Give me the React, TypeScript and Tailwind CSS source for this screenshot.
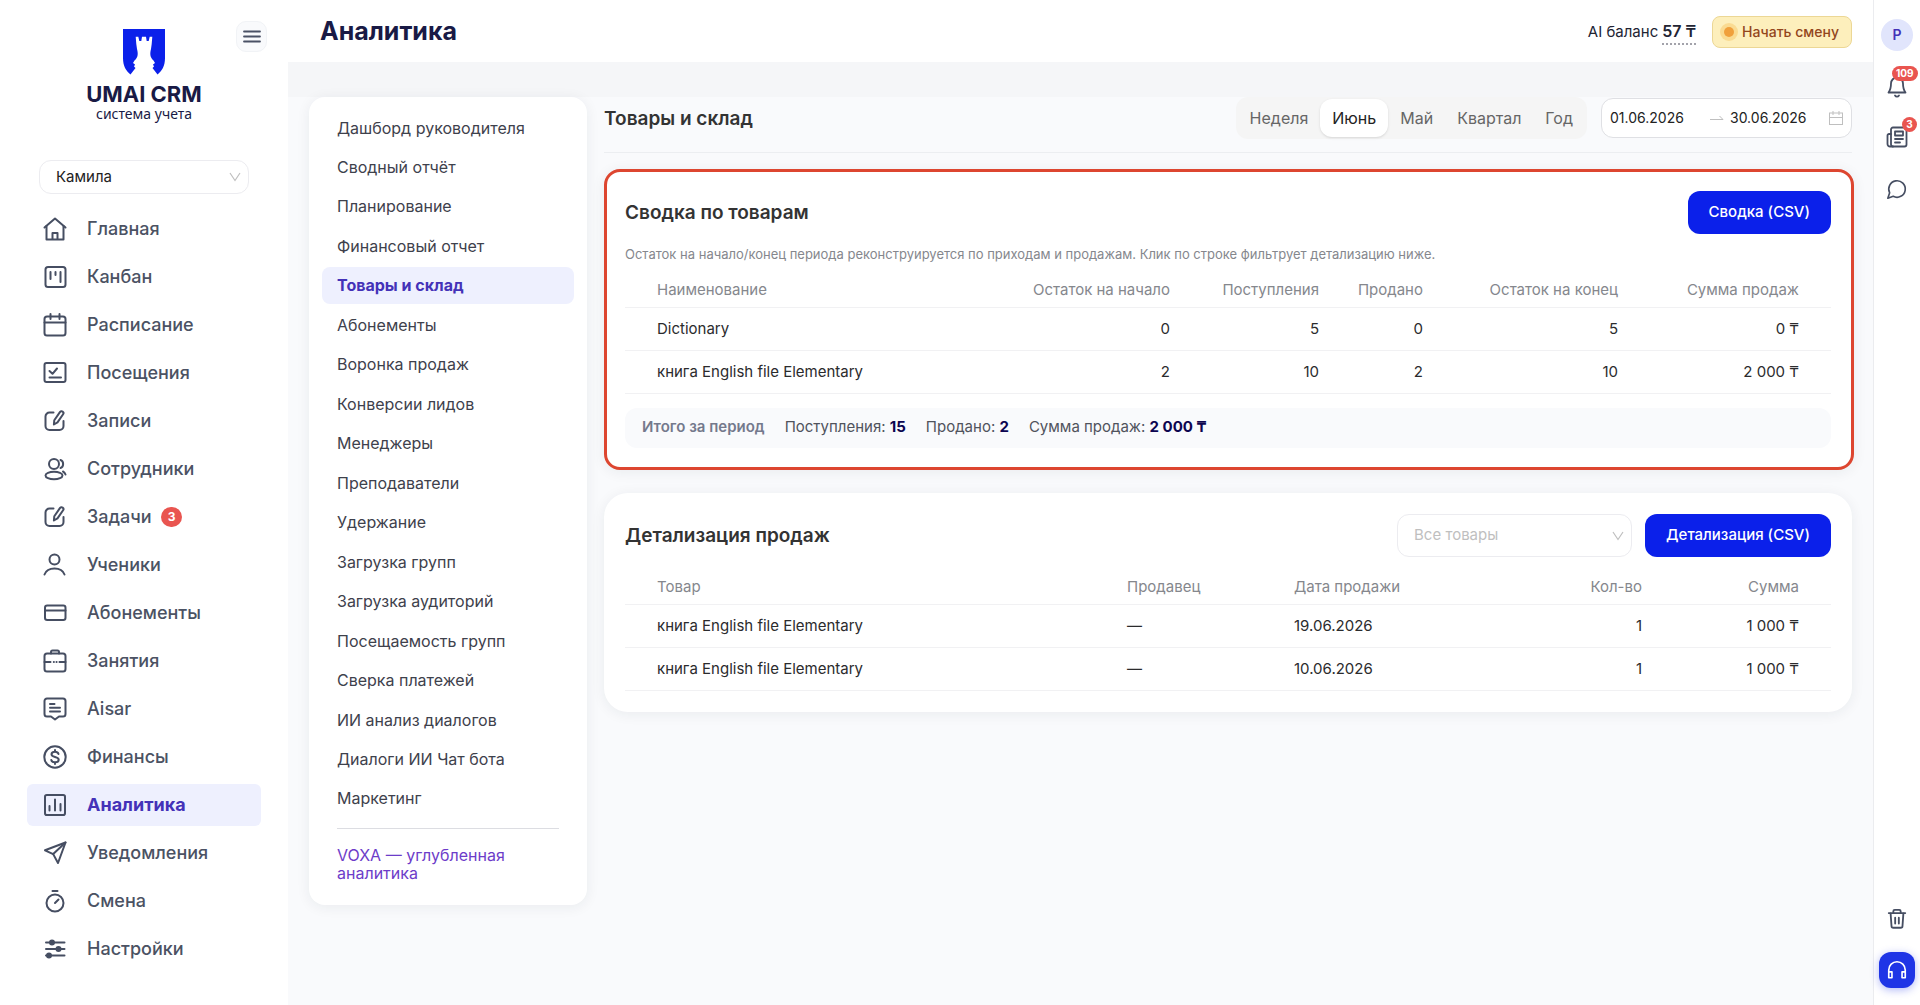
import React, { useState } from 'react';

type IconProps = { className?: string };

interface NavItem {
  label: string;
  icon: React.ReactNode;
  badge?: number;
}

interface Product {
  name: string;
  start: number;
  income: number;
  sold: number;
  end: number;
  total: string;
}

interface Sale {
  name: string;
  seller: string;
  date: string;
  count: number;
  total: string;
}

function Svg({ children, className = 'size-6', width = 2 }: { children: React.ReactNode; className?: string; width?: number }) {
  return (
    <svg
      viewBox="0 0 24 24"
      fill="none"
      stroke="currentColor"
      strokeWidth={width}
      strokeLinecap="round"
      strokeLinejoin="round"
      className={className}
      aria-hidden="true"
    >
      {children}
    </svg>
  );
}

const EditIcon = () => (
  <Svg>
    <path d="M10.500 3.500H6.500a4 4 0 0 0-4 4v9.500a4 4 0 0 0 4 4h10a4 4 0 0 0 4-4v-5" />
    <path d="M11.300 11.200l5.600-8.100a1.900 1.900 0 0 1 3.200 2.200l-5.600 8.100-3.600 2.100z" />
  </Svg>
);

const NAV: NavItem[] = [
  {
    label: 'Главная',
    icon: (
      <Svg>
        <path d="M1.500 10.500L12 1.500l10.500 9" />
        <path d="M3.500 9v13.500h17V9" />
        <path d="M9.500 22v-6h5v6" />
      </Svg>
    ),
  },
  {
    label: 'Канбан',
    icon: (
      <Svg>
        <rect x="2.500" y="2" width="20" height="20" rx="2.500" />
        <path d="M7.500 7v7M12.500 7v3M17.500 7v10" />
      </Svg>
    ),
  },
  {
    label: 'Расписание',
    icon: (
      <Svg>
        <rect x="1.500" y="3.500" width="21" height="19" rx="2.500" />
        <path d="M1.500 9.500h21M7.500 1v5M16.500 1v5" />
      </Svg>
    ),
  },
  {
    label: 'Посещения',
    icon: (
      <Svg>
        <rect x="1.500" y="2" width="21" height="19" rx="2" />
        <path d="M6.500 10l3 2.800L14 7.500M6.500 16.500h11.500" />
      </Svg>
    ),
  },
  { label: 'Записи', icon: <EditIcon /> },
  {
    label: 'Сотрудники',
    icon: (
      <Svg>
        <circle cx="11" cy="7" r="5" />
        <ellipse cx="11" cy="18.500" rx="8.500" ry="3.800" />
        <path d="M17.500 3c3.500 1 3.500 7 0 8M20 14.500c1.500.800 2 1.700 2.500 3" />
      </Svg>
    ),
  },
  { label: 'Задачи', icon: <EditIcon />, badge: 3 },
  {
    label: 'Ученики',
    icon: (
      <Svg>
        <circle cx="11.500" cy="6.500" r="5" />
        <path d="M1.500 21.500c1.500-4 5.500-6 10-6s8.500 2 10 6" />
      </Svg>
    ),
  },
  {
    label: 'Абонементы',
    icon: (
      <Svg>
        <rect x="2" y="4.500" width="20.500" height="14.500" rx="2.200" />
        <path d="M2 9.500h20.500" />
      </Svg>
    ),
  },
  {
    label: 'Занятия',
    icon: (
      <Svg>
        <rect x="1.500" y="4.500" width="21" height="18" rx="2.500" />
        <path d="M8 4.500V3a1.500 1.500 0 0 1 1.500-1.500h5A1.500 1.500 0 0 1 16 3v1.500M1.500 13H7.500M16.500 13h6M10.800 13h.1M13.500 13h.1" />
      </Svg>
    ),
  },
  {
    label: 'Aisar',
    icon: (
      <Svg>
        <path d="M4 1.500h16a2.500 2.500 0 0 1 2.500 2.500v13a2.500 2.500 0 0 1-2.500 2.500h-4l-4 3-4-3H4A2.500 2.500 0 0 1 1.500 17V4A2.500 2.500 0 0 1 4 1.500z" />
        <path d="M7 7h4.500M7 10.700h10M7 14.500h10" />
      </Svg>
    ),
  },
  {
    label: 'Финансы',
    icon: (
      <Svg>
        <circle cx="12" cy="12" r="10.700" />
        <path d="M15.500 9c-.5-1.500-1.800-2.200-3.500-2.200-2 0-3.500.9-3.500 2.500 0 3.600 7.200 1.600 7.200 5.400 0 1.600-1.500 2.600-3.700 2.600-1.900 0-3.300-.8-3.700-2.400M12 5v1.800M12 17.300V19" />
      </Svg>
    ),
  },
  {
    label: 'Аналитика',
    icon: (
      <Svg>
        <rect x="2" y="2" width="20" height="20" rx="1.800" />
        <path d="M6.500 13v4.500M12 6.500v11M17.500 11v6.500" />
      </Svg>
    ),
  },
  {
    label: 'Уведомления',
    icon: (
      <Svg>
        <path d="M22.500 1.500L2 9.300l8.200 3.800 4.800 8.900z" />
        <path d="M22.500 1.500L10.200 13.100" />
      </Svg>
    ),
  },
  {
    label: 'Смена',
    icon: (
      <Svg>
        <circle cx="12" cy="14" r="8.500" />
        <path d="M12 14l3.500-3.500M9.500 2h5" />
      </Svg>
    ),
  },
  {
    label: 'Настройки',
    icon: (
      <Svg>
        <path d="M3 5.500h18.500M3 12h18.500M3 18.500h18.500" />
        <g fill="currentColor">
          <circle cx="9" cy="5.500" r="2" />
          <circle cx="15.500" cy="12" r="2" />
          <circle cx="6" cy="18.500" r="2" />
        </g>
      </Svg>
    ),
  },
];

const REPORTS = [
  'Дашборд руководителя',
  'Сводный отчёт',
  'Планирование',
  'Финансовый отчет',
  'Товары и склад',
  'Абонементы',
  'Воронка продаж',
  'Конверсии лидов',
  'Менеджеры',
  'Преподаватели',
  'Удержание',
  'Загрузка групп',
  'Загрузка аудиторий',
  'Посещаемость групп',
  'Сверка платежей',
  'ИИ анализ диалогов',
  'Диалоги ИИ Чат бота',
  'Маркетинг',
];

const PERIODS = ['Неделя', 'Июнь', 'Май', 'Квартал', 'Год'];

const PRODUCTS: Product[] = [
  { name: 'Dictionary', start: 0, income: 5, sold: 0, end: 5, total: '0 ₸' },
  { name: 'книга English file Elementary', start: 2, income: 10, sold: 2, end: 10, total: '2 000 ₸' },
];

const SALES: Sale[] = [
  { name: 'книга English file Elementary', seller: '—', date: '19.06.2026', count: 1, total: '1 000 ₸' },
  { name: 'книга English file Elementary', seller: '—', date: '10.06.2026', count: 1, total: '1 000 ₸' },
];

function Chevron({ className = '' }: IconProps) {
  return (
    <svg viewBox="0 0 12 12" fill="none" stroke="#bfbfbf" strokeWidth="1.2" className={`pointer-events-none absolute size-3 ${className}`} aria-hidden="true">
      <path d="M1 2l5 7.500L11 2" />
    </svg>
  );
}

function Logo() {
  return (
    <div className="flex flex-col items-center text-[#191a45]">
      <svg viewBox="0 0 42 46" className="h-[46px] w-[42px]" aria-hidden="true">
        <path d="M0 0h42v29c0 8-3 13-7.500 16.500l-5-6.500 1.500-1.500-1-2 2-1.500-1.500-2.500C26.500 28 27 24 28 20l.7-5 .6-7.300h-2.600l-1 4.300h-2l-.7-4.300h-4l-.7 4.300h-2l-1-4.300h-2.600l.6 7.300.7 5c1 4 1.500 8-2.500 11.500L10 34l2 1.500-1 2 1.500 1.500-5 6.500C3 42 0 37 0 29z" fill="#0b20ea" />
      </svg>
      <span className="mt-[7px] text-[22px] leading-6 font-bold">UMAI CRM</span>
      <span className="font-['Noto_Sans',sans-serif] text-sm leading-4">система учета</span>
    </div>
  );
}

function Sidebar() {
  return (
    <aside className="w-72 shrink-0 bg-white">
      <div className="relative pt-[29px]">
        <Logo />
        <button type="button" aria-label="Меню" className="absolute top-[21px] right-[21px] flex size-[31px] items-center justify-center rounded-[10px] border border-[#f1f3f6] bg-[#f9fafc] text-[#4a5165]">
          <svg viewBox="0 0 18 13" className="h-[13px] w-[18px]" stroke="currentColor" strokeWidth="1.800" strokeLinecap="round" aria-hidden="true">
            <path d="M1 1.500h16M1 6.500h16M1 11.500h16" />
          </svg>
        </button>
      </div>
      <div className="relative mt-[38px] mr-[39px] ml-[39px]">
        <select aria-label="Филиал" className="h-[34px] w-full appearance-none rounded-xl border border-[#ececf0] bg-white pl-4 text-[15px] text-[#222]">
          <option>Камила</option>
        </select>
        <Chevron className="top-[11px] right-2" />
      </div>
      <nav className="mt-[14px] mr-[27px] ml-[27px]">
        <ul className="flex flex-col gap-[6px]">
          {NAV.map(item => {
            const active = item.label === 'Аналитика';
            return (
              <li key={item.label}>
                <a href="#" className={`flex h-[42px] items-center rounded-md pl-4 text-lg ${active ? 'bg-[#eef0fe]' : ''}`}>
                  <span className="mr-5 text-[#464e62]">{item.icon}</span>
                  <span className={active ? 'font-bold text-[#4432b8]' : 'font-medium text-[#4b5263]'}>{item.label}</span>
                  {item.badge && (
                    <span className="ml-[9px] flex h-5 items-center rounded-full bg-[#e95550] px-[7px] text-xs font-bold text-white">{item.badge}</span>
                  )}
                </a>
              </li>
            );
          })}
        </ul>
      </nav>
    </aside>
  );
}

function Header() {
  return (
    <header className="flex h-[62px] items-center justify-between bg-white pt-[2px] pr-[21px] pl-8">
      <h1 className="text-[25px] font-bold text-[#191a45]">Аналитика</h1>
      <div className="flex items-center">
        <span className="text-[15px] text-[#222433]">AI баланс</span>
        <a href="#" className="ml-1 border-b-2 border-dotted border-[#a3a3ab] text-base leading-6 font-semibold text-[#222433]">57 ₸</a>
        <button type="button" className="ml-4 flex h-8 items-center gap-1 rounded-lg border border-[#ecd795] bg-[#fdefbc] pr-3 pl-[7px] text-sm font-medium text-[#93461c]">
          <span className="flex size-[18px] items-center justify-center rounded-full bg-[#fadb92]">
            <span className="size-[10px] rounded-full bg-[#f0a03c]" />
          </span>
          Начать смену
        </button>
      </div>
    </header>
  );
}

function ReportsMenu() {
  return (
    <nav className="w-[278px] shrink-0 self-start rounded-2xl bg-white px-[13px] pt-3 pb-[23px] text-base text-[#3e414c] shadow-[0_2px_14px_rgba(30,40,60,0.07)]">
      <ul className="flex h-[708px] flex-col justify-between">
        {REPORTS.map(name => (
          <li key={name}>
            <a
              href="#"
              className={`flex h-[37px] items-center rounded-lg pl-[15px] ${name === 'Товары и склад' ? 'bg-[#eef0fe] font-bold text-[#4432b8]' : ''}`}
            >
              {name}
            </a>
          </li>
        ))}
      </ul>
      <div className="mx-[15px] mt-[11px] border-t border-[#dcdde2] pt-[17px]">
        <a href="#" className="block leading-[18px] text-[#6d3cc9]">VOXA — углубленная аналитика</a>
      </div>
    </nav>
  );
}

function Toolbar() {
  const [period, setPeriod] = useState('Июнь');

  return (
    <div className="flex h-14 items-start border-b border-[#eceef1]">
      <h2 className="grow pt-[10px] text-[19px] leading-6 font-semibold text-[#333]">Товары и склад</h2>
      <div className="flex h-[42px] items-center rounded-xl bg-[#f5f5f5] p-[2px] text-base">
        {PERIODS.map(name => (
          <button
            key={name}
            type="button"
            onClick={() => setPeriod(name)}
            className={`h-[38px] rounded-xl px-3 ${name === period ? 'bg-white text-[#222] shadow-sm' : 'text-[#666]'}`}
          >
            {name}
          </button>
        ))}
      </div>
      <div className="mt-px ml-[14px] flex h-10 w-[251px] items-center rounded-xl border border-[#dfe0e4] bg-white pr-2 pl-2 text-sm text-[#222]">
        <input type="text" aria-label="Начало периода" defaultValue="01.06.2026" className="w-[100px] outline-none" />
        <svg viewBox="0 0 14 8" className="h-2 w-[14px] shrink-0" fill="none" stroke="#bfbfbf" aria-hidden="true">
          <path d="M0 5.500h13L9.500 2" />
        </svg>
        <input type="text" aria-label="Конец периода" defaultValue="30.06.2026" className="ml-[6px] w-[98px] min-w-0 outline-none" />
        <svg viewBox="0 0 14 14" className="ml-auto size-[14px] shrink-0" fill="none" stroke="#bfbfbf" aria-hidden="true">
          <rect x="0.5" y="2" width="13" height="11.500" />
          <path d="M.5 6.500h13M4 0v4M10 0v4" />
        </svg>
      </div>
    </div>
  );
}

function Summary() {
  return (
    <section className="-mr-[2px] rounded-2xl border-[3px] border-[#dd4630] bg-white pt-[19px] pr-5 pb-[19px] pl-[18px] shadow-[0_2px_14px_rgba(30,40,60,0.07)]">
      <div className="flex items-center justify-between">
        <h3 className="pt-[2px] text-[19px] font-semibold text-[#333]">Сводка по товарам</h3>
        <button type="button" className="h-[43px] rounded-xl bg-[#0b20ea] px-[21px] text-[15px] font-medium text-white">Сводка (CSV)</button>
      </div>
      <p className="mt-3 text-[13px] leading-4 text-[#85878d]">
        Остаток на начало/конец периода реконструируется по приходам и продажам. Клик по строке фильтрует детализацию ниже.
      </p>
      <table className="mt-1 w-full table-fixed text-[15px] leading-5 text-[#2b2b2d]">
        <colgroup>
          <col />
          <col className="w-[198px]" />
          <col className="w-[149px]" />
          <col className="w-[104px]" />
          <col className="w-[195px]" />
          <col className="w-[181px]" />
        </colgroup>
        <thead>
          <tr className="h-[41px] border-b border-[#f1f1f3] text-right text-[#85878d]">
            <th className="pt-[7px] pl-8 text-left font-normal">Наименование</th>
            <th className="pt-[7px] pr-8 font-normal">Остаток на начало</th>
            <th className="pt-[7px] pr-8 font-normal">Поступления</th>
            <th className="pt-[7px] pr-8 font-normal">Продано</th>
            <th className="pt-[7px] pr-8 font-normal">Остаток на конец</th>
            <th className="pt-[7px] pr-8 font-normal">Сумма продаж</th>
          </tr>
        </thead>
        <tbody>
          {PRODUCTS.map(row => (
            <tr key={row.name} className="h-[43px] border-b border-[#f1f1f3] text-right">
              <td className="pl-8 text-left">{row.name}</td>
              <td className="pr-8">{row.start}</td>
              <td className="pr-8">{row.income}</td>
              <td className="pr-8">{row.sold}</td>
              <td className="pr-8">{row.end}</td>
              <td className="pr-8">{row.total}</td>
            </tr>
          ))}
        </tbody>
      </table>
      <div className="mt-[14px] flex h-10 items-center gap-5 rounded-xl bg-[#f9fafc] px-[17px] text-[15px] text-[#50535c]">
        <span className="font-semibold text-[#74798c]">Итого за период</span>
        <span>Поступления: <b className="font-bold text-[#0d0550]">15</b></span>
        <span>Продано: <b className="font-bold text-[#0d0550]">2</b></span>
        <span>Сумма продаж: <b className="font-bold text-[#0d0550]">2 000 ₸</b></span>
      </div>
    </section>
  );
}

function SalesDetails() {
  return (
    <section className="mt-[23px] rounded-3xl bg-white px-[21px] pt-[21px] pb-[21px] shadow-[0_2px_14px_rgba(30,40,60,0.07)]">
      <div className="flex items-center">
        <h3 className="grow pt-[2px] text-[19px] font-semibold text-[#333]">Детализация продаж</h3>
        <div className="relative w-[235px]">
          <select aria-label="Товар" className="h-[43px] w-full appearance-none rounded-xl border border-[#ececf0] bg-white pl-4 text-[15px] text-[#bfbfbf]">
            <option>Все товары</option>
          </select>
          <Chevron className="top-4 right-2" />
        </div>
        <button type="button" className="ml-[13px] h-[43px] rounded-xl bg-[#0b20ea] px-[21px] text-[15px] font-medium text-white">Детализация (CSV)</button>
      </div>
      <table className="mt-1 w-full table-fixed text-[15px] leading-5 text-[#2b2b2d]">
        <colgroup>
          <col />
          <col className="w-[167px]" />
          <col className="w-[227px]" />
          <col className="w-[185px]" />
          <col className="w-[157px]" />
        </colgroup>
        <thead>
          <tr className="h-[44px] border-b border-[#f1f1f3] text-left text-[#85878d]">
            <th className="pt-[10px] pl-8 font-normal">Товар</th>
            <th className="pt-[10px] pl-8 font-normal">Продавец</th>
            <th className="pt-[10px] pl-8 font-normal">Дата продажи</th>
            <th className="pt-[10px] pr-8 text-right font-normal">Кол-во</th>
            <th className="pt-[10px] pr-8 text-right font-normal">Сумма</th>
          </tr>
        </thead>
        <tbody>
          {SALES.map(row => (
            <tr key={row.date} className="h-[43px] border-b border-[#f1f1f3]">
              <td className="pl-8">{row.name}</td>
              <td className="pl-8">{row.seller}</td>
              <td className="pl-8">{row.date}</td>
              <td className="pr-8 text-right">{row.count}</td>
              <td className="pr-8 text-right">{row.total}</td>
            </tr>
          ))}
        </tbody>
      </table>
    </section>
  );
}

function RightRail() {
  return (
    <aside className="flex w-[47px] shrink-0 flex-col items-center border-l border-[#ebecef] bg-white pt-[19px] pb-[17px] text-[#464e62]">
      <button type="button" className="flex size-8 items-center justify-center rounded-full bg-[#e1e5fc] text-sm font-semibold text-[#4432b8]">P</button>
      <button type="button" aria-label="Уведомления" className="relative mt-[23px]">
        <Svg width={1.8}>
          <path d="M3.500 18.500h17c-2-2.500-2.500-4.500-2.500-9a6 6 0 0 0-12 0c0 4.500-.5 6.500-2.500 9zM10 21.500c1 1.500 3 1.500 4 0" />
        </Svg>
        <span className="absolute -top-2 left-[7px] flex h-[15px] items-center rounded-full bg-[#e95550] px-1 text-[10px] font-bold text-white">109</span>
      </button>
      <button type="button" aria-label="Новости" className="relative mt-[27px]">
        <Svg width={1.8}>
          <rect x="6" y="2.500" width="15.500" height="19" rx="2" />
          <path d="M6 9H4a1.500 1.500 0 0 0-1.500 1.500V19A2.500 2.500 0 0 0 5 21.500h3" />
          <path d="M10 6.500h8v4h-8zM10 14h8M10 17.500h5" />
        </Svg>
        <span className="absolute -top-2 left-[17px] flex size-[15px] items-center justify-center rounded-full bg-[#e95550] text-[10px] font-bold text-white">3</span>
      </button>
      <button type="button" aria-label="Чат" className="mt-[29px]">
        <Svg className="size-[22px]" width={1.8}>
          <path d="M7.900 20A9 9 0 1 0 4 16.100L2 22z" />
        </Svg>
      </button>
      <button type="button" aria-label="Корзина" className="mt-auto">
        <Svg className="size-[22px]" width={2}>
          <path d="M3 5.500h18M8 5V3.500A1.500 1.500 0 0 1 9.500 2h5A1.500 1.500 0 0 1 16 3.500V5M5 5.500l1 14A2 2 0 0 0 8 21.500h8a2 2 0 0 0 2-2l1-14M10 10.500v6.500M14 10.500v6.500" />
        </Svg>
      </button>
      <button type="button" aria-label="Поддержка" className="mt-[22px] flex size-9 items-center justify-center rounded-xl bg-[#1f35e6] text-white shadow-[0_2px_8px_rgba(31,53,230,0.35)]">
        <Svg className="size-[22px]" width={1.8}>
          <path d="M3 20.500V12a9 9 0 0 1 18 0v8.500M3 14h3.500v6.500H3zM21 14h-3.500v6.500H21z" />
        </Svg>
      </button>
    </aside>
  );
}

export default function App() {
  return (
    <div className="flex min-h-screen bg-[#f9fafc] font-[Inter,sans-serif]">
      <Sidebar />
      <div className="flex min-w-0 grow flex-col">
        <Header />
        <div className="h-[35px] bg-[#f5f6f8]" />
        <div className="flex gap-[17px] pr-[21px] pl-[21px]">
          <ReportsMenu />
          <main className="min-w-0 grow">
            <Toolbar />
            <div className="pt-4">
              <Summary />
              <SalesDetails />
            </div>
          </main>
        </div>
      </div>
      <RightRail />
    </div>
  );
}
